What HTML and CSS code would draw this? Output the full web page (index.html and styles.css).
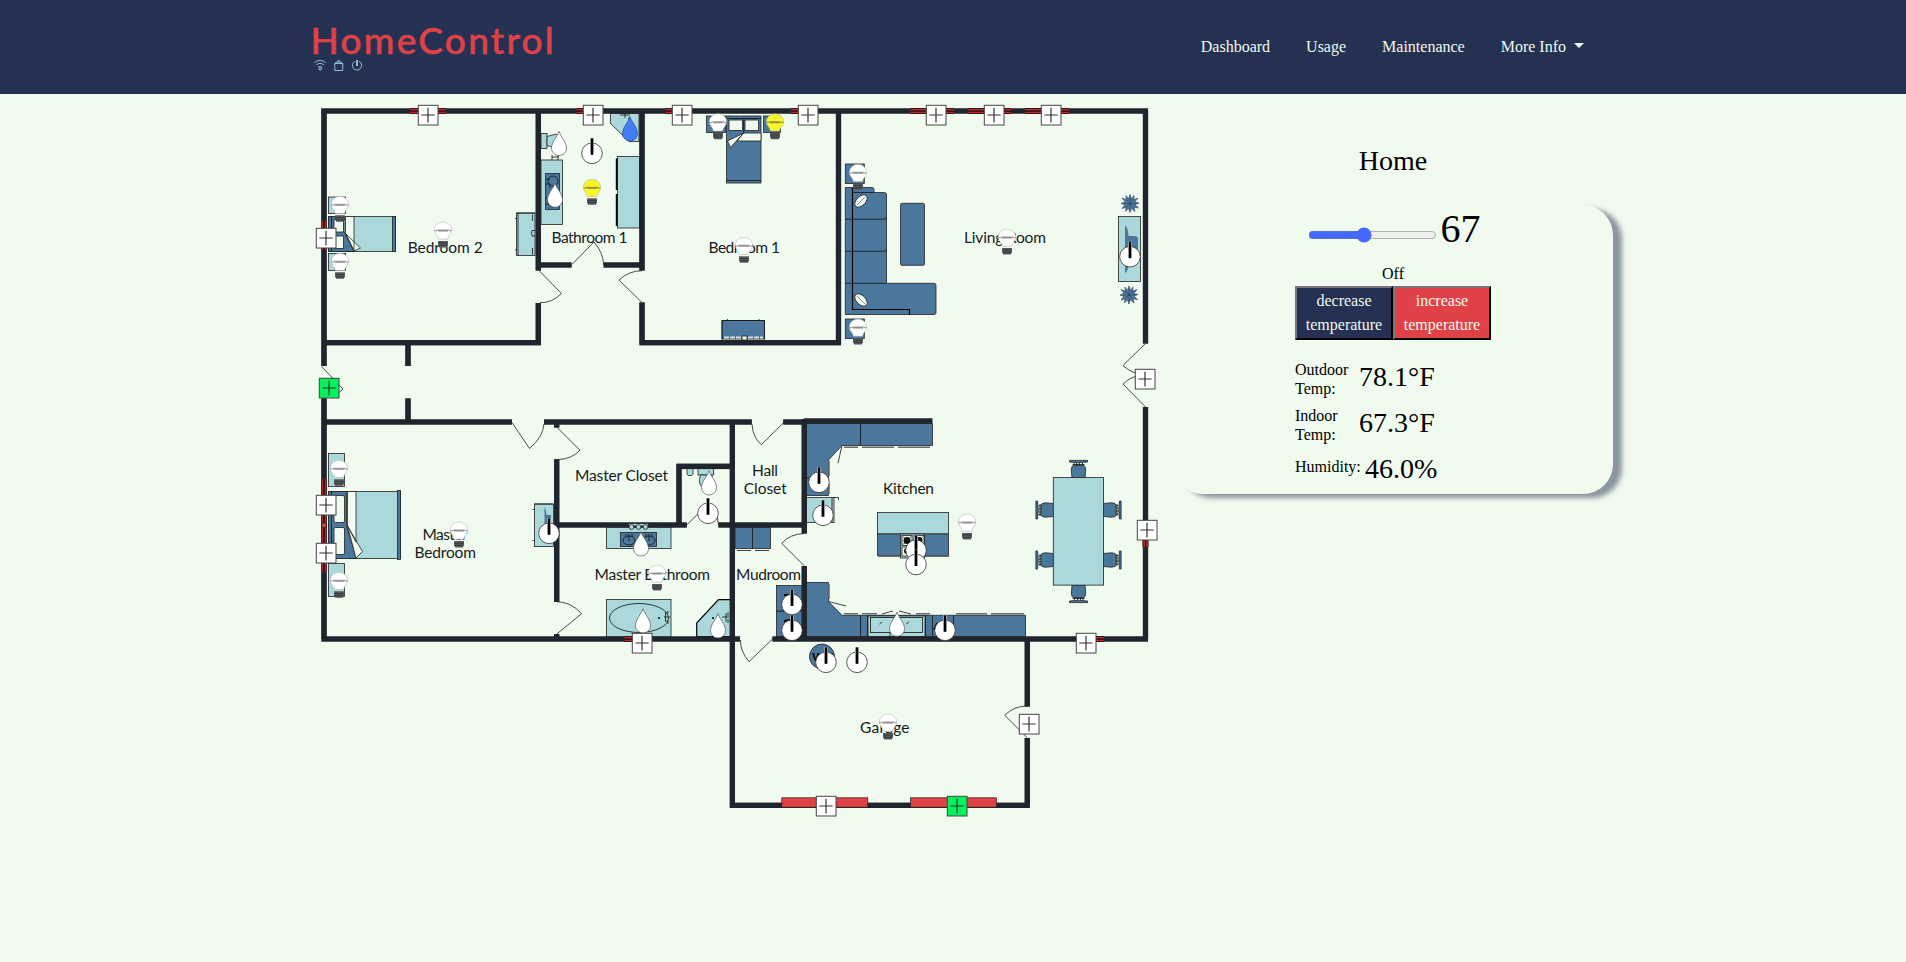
FILE: index.html
```html
<!DOCTYPE html>
<html lang="en">
<head>
<meta charset="utf-8">
<title>HomeControl</title>
<link rel="stylesheet" href="styles.css">
</head>
<body>
<header class="topbar">
  <div class="container topbar-inner">
    <a class="brand" href="#">
      <svg class="brand-logo" viewBox="293 0 280 94" width="280" height="94" role="img" aria-label="HomeControl">
        <text class="brand-name" x="310.6" y="54" textLength="243" lengthAdjust="spacing">HomeControl</text>
        <g class="brand-icon">
          <path d="M314.5 62.7Q320 58 325.700 62.700M316.300 65Q320.100 61.700 324 65M318 67.300Q320.200 65.500 322.300 67.300"/>
          <circle cx="320.200" cy="69" r="1.200"/>
          <path d="M334.800 63.500H342.700V70.500H334.800ZM334.300 64L338.800 60.300 343.200 64M337 63.500L338.800 61.500 340.600 63.500"/>
          <path d="M355 61.300A4.600 4.600 0 1 0 359 61.300"/>
          <path class="brand-tick" d="M357 60V66"/>
        </g>
      </svg>
    </a>
    <nav class="nav">
      <a class="nav-link" href="#">Dashboard</a>
      <a class="nav-link" href="#">Usage</a>
      <a class="nav-link" href="#">Maintenance</a>
      <a class="nav-link nav-more" href="#">More Info<span class="caret"></span></a>
    </nav>
  </div>
</header>

<main class="container layout">
<svg class="plan" viewBox="293 94 880 740" width="880" height="740">
  <defs>
    <g id="bulb">
      <path class="bulb-glass" d="M-4.600 17.200C-5 13.500-8.700 12-8.700 8A8.700 8 0 0 1 8.700 8C8.700 12 5 13.500 4.600 17.200Z"/>
      <path class="filament" d="M-8.500 8.700H-6L-5 7.500-4 9.600-3 7.500-2 9.600-1 7.500 0 9.600 1 7.500 2 9.600 3 7.500 4 9.600 5 7.500 6 8.700H8.500"/>
      <path class="bulb-base" d="M-4.900 19H4.900V23L3.800 25.500H-3.800L-4.900 23Z"/>
      <path class="bulb-thread" d="M-4.900 21.200H4.900M-4.700 23.400H4.700"/>
    </g>
    <path id="drop" d="M0 0C1.500 5.500 7.500 10.500 7.500 16.700C7.500 21 4.200 24.200 0 24.200S-7.500 21-7.500 16.700C-7.500 10.500-1.500 5.500 0 0Z"/>
    <g id="power">
      <circle class="power-face" r="10.300"/>
      <path class="power-halo" d="M0-15V1.500"/>
      <path class="power-bar" d="M0-15V1.500"/>
    </g>
    <g id="sensor">
      <rect class="sensor-box" x="-9.700" y="-9.700" width="19.700" height="19.700"/>
      <path class="sensor-cross" d="M-6.700 0H6.700M0-7.300V7.600"/>
    </g>
    <g id="chair">
      <path class="blue" d="M-6.500 0L-7.200-8Q-7-12.500-5-12.500H5Q7-12.500 7.200-8L6.500 0Z"/>
      <path class="ink" d="M-6-13.500H6M-4.500-15V-12.500M-2-15V-12.500M1-15V-12.500M4-15V-12.500"/>
      <path class="blue" d="M-9-17.600H9V-16Q0-14.500-9-16Z"/>
    </g>
    <g id="plant">
      <path class="leaf" d="M0-9L1.500-4.500 4-8 3.800-3.800 8-5.500 4.800-1.500 9-.5 5 1.300 8.500 4.500 4 3.800 5 8 1.500 4.800 0 9-1.500 4.800-4.500 7.800-4 3.800-8 5-5 1.300-9 0-4.800-1.800-8-5.500-3.800-3.800-4-8-1.500-4.500Z"/>
      <path class="hair" d="M-4-4L4 4M4-4L-4 4M0-6V6M-6 0H6"/>
    </g>
  </defs>

  <!-- Bedroom 2 -->
  <g>
    <rect class="teal" x="328.500" y="197" width="17" height="16.500"/>
    <rect class="teal" x="328.500" y="253.500" width="17" height="17"/>
    <rect class="teal" x="328.500" y="216.500" width="67" height="35"/>
    <path class="blue" d="M328.500 216.500H344V232L354.500 251.500H328.500Z"/>
    <rect class="blue" x="392.500" y="216.500" width="3" height="35"/>
    <path class="paper" d="M334 219.500H343.500V232H334ZM334 236H343.500V248.500H334ZM345.500 216.500H354V251.500L345.500 234ZM346 234L360.500 248 354 251Z"/>
    <path class="ink" d="M331.500 216.500V251.500"/>
    <rect class="teal" x="516.500" y="213" width="18.500" height="42.500"/>
    <path class="ink" d="M516.500 213H535M518 213V255.500M532.500 214.500V221M532.500 248V254.500M515 218.500H517M515 250H517M535 230.500H532L531.500 233.500 532 236H535"/>
  </g>

  <!-- Bathroom 1 -->
  <g>
    <rect class="teal" x="541" y="133.500" width="6" height="15"/>
    <path class="teal" d="M547 136.500L556 134Q565 141 556 148L547 145.500Z"/>
    <path class="ink" d="M552 155V160M558 155V160M552 157H559"/>
    <rect class="teal" x="541" y="160" width="21.500" height="64.500"/>
    <rect class="blue" x="545.500" y="173.500" width="14" height="36"/>
    <circle class="ink" cx="553" cy="181" r="5"/><circle class="ink" cx="553" cy="202" r="5"/>
    <path class="ink" d="M546 179H550M546 184H550V188M546 198H550M546 204H549"/>
    <path class="teal" d="M610.500 113.500H639V141.500H629L610.500 123.500Z"/>
    <path class="ink" d="M620 115H630M625 113V118M629 117V121"/>
    <rect class="teal" x="617.500" y="156.500" width="22" height="71.500"/>
    <path class="heavy" d="M616.700 158.500V190M616.700 194V226"/>
  </g>

  <!-- Bedroom 1 -->
  <g>
    <rect class="blue" x="706.500" y="116" width="19" height="16.500"/>
    <rect class="blue" x="763.500" y="116" width="17" height="16.500"/>
    <rect class="blue" x="726.500" y="116" width="34.500" height="67"/>
    <path class="paper" d="M729 120H742.500V130.500H729ZM745 120H758.500V130.500H745Z"/>
    <path class="paper" d="M743.500 133H761V141H737ZM743.500 133L730.500 147.500 727.500 141Z"/>
    <path class="ink" d="M726.500 118.500H761M726.500 180.500H761M743.700 118.500V133"/>
    <rect class="blue" x="722" y="320.500" width="42.500" height="18.500"/>
    <path class="ink" d="M722 339.500V320.500H764.500V339.500M727.500 319V321M759 319V321"/>
    <path class="dash-light" d="M724 337.500H763"/>
    <rect class="paper" x="742" y="336" width="5" height="4"/>
  </g>

  <!-- Living room -->
  <g>
    <rect class="blue" x="845.300" y="164" width="19" height="19.500"/>
    <rect class="blue" x="845.300" y="319" width="19" height="19.500"/>
    <path class="blue" d="M845.300 187.500H872Q874 187.500 874 189.500V192.500H884.500Q886.500 192.500 886.500 195V283.300H934Q936 283.300 936 285.500V312.500Q936 314.500 934 314.500H845.300Z"/>
    <path class="ink" d="M853 192.500H874M845.300 219.200H884Q886.500 219.200 886.500 217M845.300 251.300H884Q886.500 251.300 886.500 249M845.300 283.300H886.500"/>
    <path class="heavy-thin" d="M852.500 188V309.500H909.500V314.500"/>
    <ellipse class="paper" cx="861" cy="201" rx="7.500" ry="4.500" transform="rotate(-45 861 201)"/>
    <ellipse class="paper" cx="861" cy="300" rx="7.500" ry="4.500" transform="rotate(45 861 300)"/>
    <path class="hair" d="M857 205L865 197M857 296L865 304"/>
    <rect class="blue" x="900.500" y="203.300" width="24" height="62" rx="1.500"/>
    <use href="#plant" x="1130" y="203.500"/>
    <use href="#plant" x="1129" y="295"/>
    <rect class="teal" x="1118.500" y="216.500" width="22" height="65"/>
    <path class="blue-fill" d="M1125 225.500Q1128 227 1128.500 236H1135Q1138 236 1138 240V259Q1138 263 1133 263H1128.500Q1128.500 271 1125 273Z"/>
  </g>

  <!-- Master bedroom -->
  <g>
    <rect class="teal" x="328.500" y="453.500" width="16" height="33"/>
    <rect class="teal" x="328.500" y="563.500" width="16" height="33"/>
    <rect class="teal" x="328.500" y="491.500" width="72" height="67"/>
    <path class="blue" d="M328.500 491.500H346.500V526L356.500 558.500H328.500Z"/>
    <rect class="blue" x="397.500" y="490.500" width="3" height="69"/>
    <rect class="paper" x="334" y="495.500" width="10.500" height="27" rx="1.500"/>
    <rect class="paper" x="334" y="527.500" width="10.500" height="27" rx="1.500"/>
    <path class="paper" d="M347.500 491.500H356V542L347.500 526ZM347.500 526L362.500 551.500 356 558Z"/>
    <path class="ink" d="M331.500 491V559"/>
    <rect class="teal" x="534.500" y="504" width="19" height="42.500"/>
    <path class="ink" d="M534.500 504H553M532.500 509.500H534.500M532.500 540.500H534.500"/>
    <path class="blue-fill" d="M544.500 507Q546 509 546.500 515H551V525H546.500V540H544.500Z"/>
  </g>

  <!-- Master bathroom -->
  <g>
    <path class="teal" d="M687 468.500H693V474L692 475.500H688L687 474Z"/>
    <rect class="teal" x="698" y="468.500" width="15.500" height="6.500"/>
    <path class="teal" d="M700.500 475Q697 484 704 489H712V475Z"/>
    <rect class="teal" x="606.500" y="527" width="64.500" height="21.500"/>
    <rect class="blue" x="620.500" y="532.500" width="36" height="14"/>
    <ellipse class="ink" cx="629" cy="540.500" rx="6" ry="4.500"/><ellipse class="ink" cx="649" cy="540.500" rx="6" ry="4.500"/>
    <path class="ink" d="M626 534V537M629 534V541M632 534V537M646 534V537M649 534V541M652 534V537"/>
    <rect class="teal" x="606.500" y="599.500" width="64.500" height="37.500"/>
    <ellipse class="ink" cx="639" cy="618" rx="29.500" ry="14.500"/>
    <path class="ink" d="M664 617H670M665 613H668V611M665 621H668V624M665.500 613V621"/><circle cx="659" cy="618" r="1"/>
    <path class="teal edge-dark" d="M718.500 599.700H730.500V636.500H696.700V623Z"/>
    <path class="ink" d="M722 617H729M726 613V622M728 612V616M728 619V623"/><circle cx="713" cy="618" r="1"/>
  </g>

  <!-- Mudroom -->
  <g>
    <rect class="blue" x="735" y="527" width="35.500" height="21.500"/>
    <path class="ink" d="M752.500 527V548.500M737 550.500H751M755 550.500H769"/>
    <rect class="blue" x="776.500" y="585.500" width="26" height="25.500"/>
    <rect class="blue" x="776.500" y="611.500" width="26" height="25"/>
    <path class="heavy" d="M784 595H790M784 621L790 620"/>
  </g>

  <!-- Kitchen -->
  <g>
    <path class="blue" d="M806.500 423.500H932.500V445.500H842L828.500 460V495.500H806.500Z"/>
    <path class="ink" d="M860.500 423.500V445.500M806.500 478H816M842 445.500L838 463"/>
    <path class="counter-edge" d="M844 447.200H858M862 447.200H894M898 447.200H930M829 461V476M829 484V494"/>
    <rect class="teal" x="806.500" y="497.500" width="27.500" height="25"/>
    <path class="ink" d="M832 497.500V522M834 497.500H838.500V500"/>
    <rect class="teal" x="877.500" y="512.500" width="71" height="21.500"/>
    <rect class="blue" x="877.500" y="534" width="71" height="21.500"/>
    <path class="counter-edge" d="M878 556.300H949"/>
    <rect class="teal" x="900.500" y="534" width="24" height="24"/>
    <rect class="paper" x="902" y="535.500" width="10" height="10"/><rect class="paper" x="914" y="535.500" width="10" height="10"/><rect class="paper" x="902" y="547" width="10" height="9"/>
    <circle class="burner" cx="907" cy="540.500" r="3.500"/><circle class="burner" cx="919" cy="540.500" r="3.500"/><circle class="burner" cx="907" cy="551" r="3"/>
    <path class="ink" d="M903 536.500L911 544.500M911 536.500L903 544.500M915 536.500L923 544.500M923 536.500L915 544.500"/>
    <path class="blue" d="M806.500 582.500H828.500V601.500L842 615.300H1025.500V636.500H806.500Z"/>
    <path class="ink" d="M860.500 615.300V636.500M867.500 615.300V636.500M925.500 615.300V636.500M932.500 615.300V636.500M953.500 615.300V636.500M828.500 601.500L846 606M882 614L893 611M899 611L911 614"/>
    <path class="counter-edge" d="M844 613.800H858M862 613.800H877M916 613.800H930M956 613.800H987M991 613.800H1024M829 584V599"/>
    <rect class="teal" x="868" y="616" width="57" height="20.500"/>
    <rect class="ink" x="870.500" y="617.500" width="52" height="15"/>
    <path class="ink" d="M879.500 624L882 622M906 624L909 622M889 633H903M890 634V636"/>
    <path class="heavy" d="M934 630L937 623"/>
    <g>
      <use href="#chair" transform="translate(1078.500 478)"/>
      <use href="#chair" transform="translate(1078.500 585) rotate(180)"/>
      <use href="#chair" transform="translate(1053.500 510) rotate(-90)"/>
      <use href="#chair" transform="translate(1053.500 560) rotate(-90)"/>
      <use href="#chair" transform="translate(1103.500 510) rotate(90)"/>
      <use href="#chair" transform="translate(1103.500 560) rotate(90)"/>
      <rect class="teal" x="1053.300" y="477.600" width="50.300" height="107.500"/>
    </g>
  </g>

  <!-- Garage water heater -->
  <circle class="blue" cx="822" cy="656.500" r="12.500"/>
  <text class="heater" x="812" y="661">WH</text>

  <g>
    <path id="walls" class="wall-edge" d="M321.300 111H1148M324 111V366M324 398.500V639M1145.500 111V343.500M1145.500 407V639M538.300 111V270.500M538.300 303V343M321.500 342.700H541M540 265H571.500M603.700 265H642M642 111V270.500M642 302.500V343M639.500 342.700H841M838.500 111V343M408 343V366M408 398.500V422M324 422H512M544 422H751.700M783.300 422H805M804 421H932.300M556.700 422V427.500M556.700 459.300V602M556.700 634V639M556.700 525H686.700M718.500 525H806M679 464V525M676.600 466.300H732M732.400 422V807.700M804.300 419V533.500M804.300 566V639M321.500 639H740M772.500 639H1148M730 805.300H1029.800M1027.300 639V706.500M1027.300 738V805"/>
    <use href="#walls" class="wall-core"/>
    <path class="thin-line" d="M680 468.700H730"/>
  </g>

  <!-- Windows -->
  <g>
    <path class="window-frame" d="M410 111H446M576.500 111H604M665.500 111H692M791 111H818M910.300 111H954M967.500 111H1011M1025 111H1069M324 220.500V250M324 479V571.700M624.500 639H650M1145.500 525V547M1078 639H1104.300"/>
    <path class="window-pane" d="M410 109.600H446M410 112.500H446M576.500 109.600H604M576.500 112.500H604M665.500 109.600H692M665.500 112.500H692M791 109.600H818M791 112.500H818M910.300 109.600H954M910.300 112.500H954M967.500 109.600H1011M967.500 112.500H1011M1025 109.600H1069M1025 112.500H1069M322.400 220.500V250M325.600 220.500V250M322.400 479V571.700M325.600 479V571.700M624.500 637.600H650M624.500 640.500H650M1144.200 525V547M1147 525V547M1078 637.600H1104.300M1078 640.500H1104.300"/>
    <path class="red" d="M322 523H326V527.500H322Z"/>
    <rect class="red" x="781.800" y="797.800" width="86" height="9.400"/>
    <rect class="red" x="910.500" y="797.800" width="86" height="9.400"/>
  </g>

  <!-- Doors -->
  <path class="door" d="M539 270.500L561.500 293.500Q552 303 540 302.700M571.700 264.700L594 242Q603 252 603.700 265M642 302.500L619 280Q629 270.700 642 270.700M321.500 366.500L343 389Q338 394 334 396M512 422.500L529.500 448.500Q543 437 544 424M556.700 427L580 450.300Q571 459.500 558 459.500M783.300 423L761.300 444.700Q752.500 437 752 424M686.700 525L708 504Q718 512 718.500 525M556.700 634L581.700 613.700Q571 602 557 601.700M804.500 566L781.700 543.300Q790 534 804 533.500M772.500 639L749 661.700Q740 651 740.500 640M1027.500 738L1004.700 715.300Q1014 706 1027 706M1145.500 343.500L1123 365.500Q1132 374 1145 375M1145.500 407L1123 384Q1132 375 1145 375"/>

  <!-- Vanity lights in front of the wall -->
  <g class="teal"><rect x="628.500" y="523.500" width="20" height="2.500"/><circle cx="631.500" cy="527" r="2.400"/><circle cx="638.500" cy="527" r="2.400"/><circle cx="645.500" cy="527" r="2.400"/></g>

  <!-- Room names -->
  <g class="room">
    <text x="407.700" y="253.300" textLength="75">Bedroom 2</text>
    <text x="551.500" y="242.500" textLength="76">Bathroom 1</text>
    <text x="708.500" y="253" textLength="71.500">Bedroom 1</text>
    <text x="964" y="242.500" textLength="82">Living Room</text>
    <text x="422.500" y="540" textLength="45">Master</text>
    <text x="414.500" y="558.300" textLength="61.500">Bedroom</text>
    <text x="575" y="481.200" textLength="93">Master Closet</text>
    <text x="752" y="476.300" textLength="26">Hall</text>
    <text x="743.700" y="494.300" textLength="43">Closet</text>
    <text x="594.500" y="580.300" textLength="115.500">Master Bathroom</text>
    <text x="736" y="580.300" textLength="65">Mudroom</text>
    <text x="883" y="494.300" textLength="51">Kitchen</text>
    <text x="860" y="732.700" textLength="49.500">Garage</text>
  </g>

  <!-- Lights -->
  <g class="off">
    <use href="#bulb" x="340" y="196.300"/><use href="#bulb" x="340" y="253.300"/><use href="#bulb" x="443" y="222"/>
    <use href="#bulb" x="718" y="113.700"/><use href="#bulb" x="744" y="237.300"/>
    <use href="#bulb" x="858" y="164.300"/><use href="#bulb" x="858" y="319"/><use href="#bulb" x="1007" y="229"/>
    <use href="#bulb" x="339" y="460.300"/><use href="#bulb" x="339" y="572.300"/><use href="#bulb" x="459" y="522"/>
    <use href="#bulb" x="657" y="565"/><use href="#bulb" x="967" y="514"/><use href="#bulb" x="888" y="714"/>
  </g>
  <g class="on-light"><use href="#bulb" x="775" y="113.700"/><use href="#bulb" x="592" y="179.300"/></g>

  <!-- Water -->
  <g class="water">
    <use href="#drop" x="559" y="131.300"/><use href="#drop" x="555" y="183"/>
    <use href="#drop" x="709" y="470.700"/><use href="#drop" x="641" y="531.700"/>
    <use href="#drop" x="643" y="608.700"/><use href="#drop" x="718" y="613.700"/><use href="#drop" x="897" y="612"/>
  </g>
  <use class="water-on" href="#drop" x="630" y="116.700"/>

  <!-- Appliances -->
  <g>
    <use href="#power" x="592" y="153.300"/><use href="#power" x="1130" y="256.700"/><use href="#power" x="549" y="533.300"/>
    <use href="#power" x="708" y="513.300"/><use href="#power" x="792" y="604.500"/><use href="#power" x="792" y="630.300"/>
    <use href="#power" x="819" y="482.300"/><use href="#power" x="823" y="515.300"/>
    <use href="#power" x="916" y="550.300"/><use href="#power" x="916" y="564.500"/><use href="#power" x="945" y="630.300"/>
    <use href="#power" x="826" y="662.300"/><use href="#power" x="857" y="662.300"/>
  </g>

  <!-- Door and window sensors -->
  <g class="closed">
    <use href="#sensor" x="428" y="115"/><use href="#sensor" x="593" y="115"/><use href="#sensor" x="682" y="115"/>
    <use href="#sensor" x="808" y="115"/><use href="#sensor" x="936" y="115"/><use href="#sensor" x="994" y="115"/>
    <use href="#sensor" x="1051" y="115"/><use href="#sensor" x="326" y="238"/><use href="#sensor" x="326" y="505"/>
    <use href="#sensor" x="326" y="553"/><use href="#sensor" x="642" y="643"/><use href="#sensor" x="1147" y="530"/>
    <use href="#sensor" x="1086" y="643"/><use href="#sensor" x="1145" y="379"/><use href="#sensor" x="1029" y="724"/>
    <use href="#sensor" x="826" y="806"/>
  </g>
  <g class="open"><use href="#sensor" x="329" y="388"/><use href="#sensor" x="957" y="806"/></g>
</svg>

<section class="side">
  <h1 class="side-title">Home</h1>
  <div class="thermostat">
    <div class="setpoint">
      <input class="slider" type="range" min="0" max="100" value="43" aria-label="Target temperature">
      <span class="target">67</span>
    </div>
    <div class="controls">
      <div class="status">Off</div>
      <div class="buttons">
        <button class="btn btn-down">decrease temperature</button><button class="btn btn-up">increase temperature</button>
      </div>
      <div class="readings">
        <div class="reading"><span class="label">Outdoor Temp:</span><span class="value">78.1°F</span></div>
        <div class="reading"><span class="label">Indoor Temp:</span><span class="value">67.3°F</span></div>
        <div class="reading reading-single"><span class="label">Humidity:</span><span class="value">46.0%</span></div>
      </div>
    </div>
  </div>
</section>
</main>
</body>
</html>
```

FILE: styles.css
```css
* { box-sizing: border-box; }
body {
  margin: 0;
  background: #f0faef;
  color: #000;
  font: 16px/24px "Liberation Serif", "Times New Roman", serif;
}
.container { width: 1320px; margin: 0 auto; }

.topbar { height: 94px; background: #243153; }
.topbar-inner { display: flex; justify-content: space-between; align-items: center; height: 94px; padding-right: 29px; }
.brand { display: block; height: 94px; }
.brand-logo { display: block; }
.brand-name { font: 500 37px Lato, sans-serif; fill: #e04147; stroke: #e04147; stroke-width: .5; }
.brand-icon { fill: none; stroke: #a2cdd5; stroke-width: .9; }
.brand-icon .brand-tick { stroke-width: 1.800; }
.nav { display: flex; gap: 36px; }
.nav-link { color: #f0faef; text-decoration: none; }
.nav-more { display: flex; }
.caret {
  margin: 8px 0 0 8px;
  width: 10px;
  height: 0;
  border-top: 5px solid #f0faef;
  border-left: 5px solid transparent;
  border-right: 5px solid transparent;
}

.layout { display: flex; }
.plan { display: block; flex: none; }
.teal, .blue, .paper { stroke: #222; stroke-width: .8; }
.teal { fill: #abd8db; }
.blue { fill: #4c779c; }
.blue-fill { fill: #4c779c; }
.paper { fill: #f0faef; }
.edge-dark { stroke: #000; stroke-width: 1.2; }
.ink { fill: none; stroke: #111; stroke-width: .8; }
.hair { fill: none; stroke: #243153; stroke-width: .5; }
.heavy { fill: none; stroke: #000; stroke-width: 1.800; }
.heavy-thin { fill: none; stroke: #000; stroke-width: 1.2; }
.dash-light { fill: none; stroke: #d5e3e6; stroke-width: 2; stroke-dasharray: 5 1; }
.counter-edge { fill: none; stroke: #676b68; stroke-width: 1.5; }
.burner { fill: #111; }
.leaf { fill: #4c779c; stroke: #243f5c; stroke-width: .6; }
.wall-edge { fill: none; stroke: #20242d; stroke-width: 5.2; }
.wall-core { fill: none; }
.thin-line { fill: none; stroke: #222; stroke-width: .5; }
.window-frame { fill: none; stroke: #111; stroke-width: 6; }
.window-pane { fill: none; stroke: #b8282f; stroke-width: 1.7; }
.red { fill: #e04147; stroke: #222; stroke-width: .7; }
.door { fill: none; stroke: #222; stroke-width: .8; }
.room { font: 15.5px Lato, sans-serif; fill: #151a1c; }
.heater { font: bold 12px Lato, sans-serif; }

.bulb-glass { stroke: #aaa; stroke-width: .5; }
.filament { fill: none; stroke: #444; stroke-width: .6; }
.bulb-base { fill: #555659; }
.bulb-thread { fill: none; stroke: #303134; stroke-width: .7; }
.off { fill: #fff; }
.on-light { fill: #f8f628; }
.water { fill: #fff; stroke: #555; stroke-width: .7; }
.water-on { fill: #417df0; stroke: #234b99; stroke-width: .7; }
.power-face { fill: #fff; stroke: #333; stroke-width: .8; }
.power-halo { stroke: #fff; stroke-width: 4; }
.power-bar { stroke: #000; stroke-width: 2.800; }
.closed { fill: #fff; }
.open { fill: #00f35b; }
.sensor-box { stroke: #444; stroke-width: 1; }
.sensor-cross { fill: none; stroke: #333; stroke-width: 1.2; }

.side { width: 440px; padding-top: 50px; }
.side-title { margin: 0 0 28px; font-size: 28px; font-weight: 400; line-height: 33px; text-align: center; }
.thermostat {
  height: 289px;
  padding-top: 1px;
  border-radius: 30px;
  box-shadow: 9px 4px 5px rgba(36, 49, 83, .5);
}
.setpoint { display: flex; justify-content: center; gap: 2px; height: 56px; }
.slider { width: 129px; height: 16px; margin: 21px 2px 0; accent-color: #4569ff; }
.target { font-size: 40px; line-height: 46px; }
.controls { width: 196px; margin: 0 auto; }
.status { text-align: center; }
.buttons { display: flex; }
.btn {
  flex: 1;
  height: 54px;
  padding: 1px 6px;
  border: 2px outset #767676;
  border-color: #767676 #222 #222 #767676;
  color: #f0faef;
  font: inherit;
}
.btn-down { background: #243153; }
.btn-up { background: #e04147; }
.readings { display: flex; flex-direction: column; gap: 8px; padding-top: 20px; }
.reading { display: flex; align-items: flex-start; height: 38px; }
.label { width: 64px; line-height: 19px; }
.value { font-size: 28px; line-height: 33px; }
.reading-single .label { width: 70px; padding-top: 5px; }
```
